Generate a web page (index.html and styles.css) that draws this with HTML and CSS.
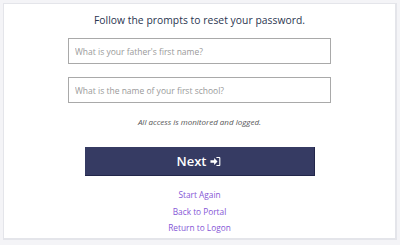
FILE: index.html
```html
<!DOCTYPE html>
<html>
<head>
<meta charset="utf-8">
<link rel="stylesheet" href="styles.css">
</head>
<body>
<div class="card">
  <h1 class="title">Follow the prompts to reset your password.</h1>
  <form class="form">
    <input class="field first" type="text" placeholder="What is your father's first name?">
    <input class="field" type="text" placeholder="What is the name of your first school?">
    <p class="notice">All access is monitored and logged.</p>
    <button class="next" type="button">Next
      <svg class="icon" viewBox="0 0 12 12" width="11" height="11">
        <path d="M0.5 4.6 H4.5 V2.3 L8.2 6 L4.5 9.7 V7.4 H0.5 Z" fill="#fff"/>
        <path d="M7 1 H10 Q11.3 1 11.3 2.3 V9.7 Q11.3 11 10 11 H7 V9.8 H9.8 Q10.1 9.8 10.1 9.5 V2.5 Q10.1 2.2 9.8 2.2 H7 Z" fill="#fff"/>
      </svg>
    </button>
  </form>
  <nav class="links">
    <a href="#">Start Again</a>
    <a href="#">Back to Portal</a>
    <a href="#">Return to Logon</a>
  </nav>
</div>
</body>
</html>
```
FILE: styles.css
```css
html, body {
  margin: 0;
  padding: 0;
  background: #f4f4f7;
}
body {
  font-family: "Open Sans", "Lucida Grande", sans-serif;
  width: 400px;
  height: 245px;
  overflow: hidden;
}
.card {
  margin: 3px 3px 0 3px;
  height: 237px;
  box-sizing: border-box;
  background: #fff;
  border: 1px solid #e4e5ea;
  border-bottom-width: 2px;
  border-right-width: 2px;
  display: flex;
  flex-direction: column;
  align-items: center;
  padding-top: 8px;
}
.title {
  margin: 0;
  font-size: 10.3px;
  font-weight: normal;
  line-height: 16px;
  color: #2a3550;
  letter-spacing: 0.05px;
}
.form {
  display: flex;
  flex-direction: column;
  align-items: center;
  margin-top: 10px;
}
.field {
  width: 263px;
  height: 26px;
  box-sizing: border-box;
  border: 1px solid #a9a9a9;
  border-radius: 0;
  padding: 0 6px;
  font-family: "Open Sans", sans-serif;
  font-size: 8.5px;
  color: #333;
  outline: none;
  margin: 0 0 13px 0;
}
.field::placeholder {
  color: #9a9a9a;
}
.notice {
  margin: 0;
  font-size: 8px;
  font-style: italic;
  line-height: 12px;
  color: #555;
}
.next {
  margin-top: 19px;
  width: 230px;
  height: 29px;
  border: none;
  border-right: 1px solid #22264a;
  border-bottom: 1px solid #22264a;
  background: #363b63;
  color: #fff;
  font-family: "Open Sans", sans-serif;
  font-weight: 600;
  font-size: 13px;
  display: flex;
  align-items: center;
  justify-content: center;
  gap: 4px;
  padding: 0;
}
.icon {
  display: block;
}
.links {
  display: flex;
  flex-direction: column;
  align-items: center;
  margin-top: 11px;
}
.links a {
  font-size: 8.3px;
  line-height: 16.5px;
  color: #8556d6;
  text-decoration: none;
}
```
